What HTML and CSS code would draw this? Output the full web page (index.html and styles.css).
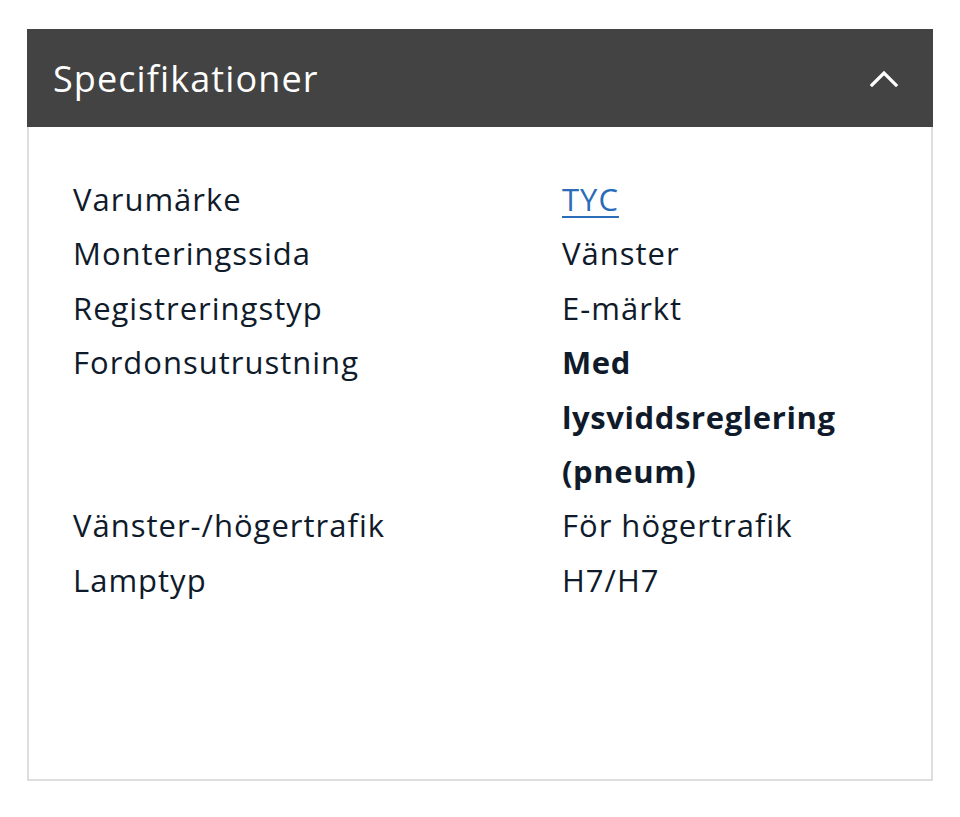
FILE: index.html
```html
<!DOCTYPE html>
<html lang="sv">
<head>
<meta charset="utf-8">
<link rel="stylesheet" href="styles.css">
<title>Specifikationer</title>
</head>
<body>
<section class="panel">
  <header class="panel-head">
    <h2 class="panel-title">Specifikationer</h2>
    <svg class="chevron" width="30" height="18" viewBox="0 0 30 18" aria-hidden="true">
      <path d="M3 16 L15 4 L27 16" fill="none" stroke="#fff" stroke-width="3.2" stroke-linecap="square"/>
    </svg>
  </header>
  <div class="panel-body">
    <dl class="specs">
      <dt>Varumärke</dt><dd><a href="#" class="link">TYC</a></dd>
      <dt>Monteringssida</dt><dd>Vänster</dd>
      <dt>Registreringstyp</dt><dd>E-märkt</dd>
      <dt>Fordonsutrustning</dt><dd class="strong">Med lysviddsreglering (pneum)</dd>
      <dt>Vänster-/högertrafik</dt><dd>För högertrafik</dd>
      <dt>Lamptyp</dt><dd>H7/H7</dd>
    </dl>
  </div>
</section>
</body>
</html>
```
FILE: styles.css
```css
html, body {
  margin: 0;
  padding: 0;
  background: #fff;
}
body {
  padding: 29px 27px 0 27px;
  font-family: "Open Sans", "Lato", sans-serif;
  color: #0f1b2b;
}
.panel {
  width: 906px;
  box-sizing: border-box;
}
.panel-head {
  background: #434343;
  height: 98px;
  display: flex;
  align-items: center;
  justify-content: space-between;
  padding: 0 34px 0 26px;
  box-sizing: border-box;
}
.panel-title {
  margin: 0;
  color: #fff;
  font-weight: 400;
  font-size: 36px;
  letter-spacing: 1.1px;
}
.chevron {
  display: block;
}
.panel-body {
  border: 2px solid #dedede;
  border-top: 0;
  height: 654px;
  box-sizing: border-box;
  padding: 45px 44px 0 44px;
}
.specs {
  margin: 0;
  display: grid;
  grid-template-columns: 489px 1fr;
  font-size: 31px;
  line-height: 54.4px;
  letter-spacing: 1px;
}
.specs dt, .specs dd {
  margin: 0;
}
.strong {
  font-weight: 700;
  letter-spacing: 0.6px;
}
.link {
  color: #2b6cb8;
  text-decoration: underline;
  text-underline-offset: 5px;
  text-decoration-thickness: 2px;
}
```
